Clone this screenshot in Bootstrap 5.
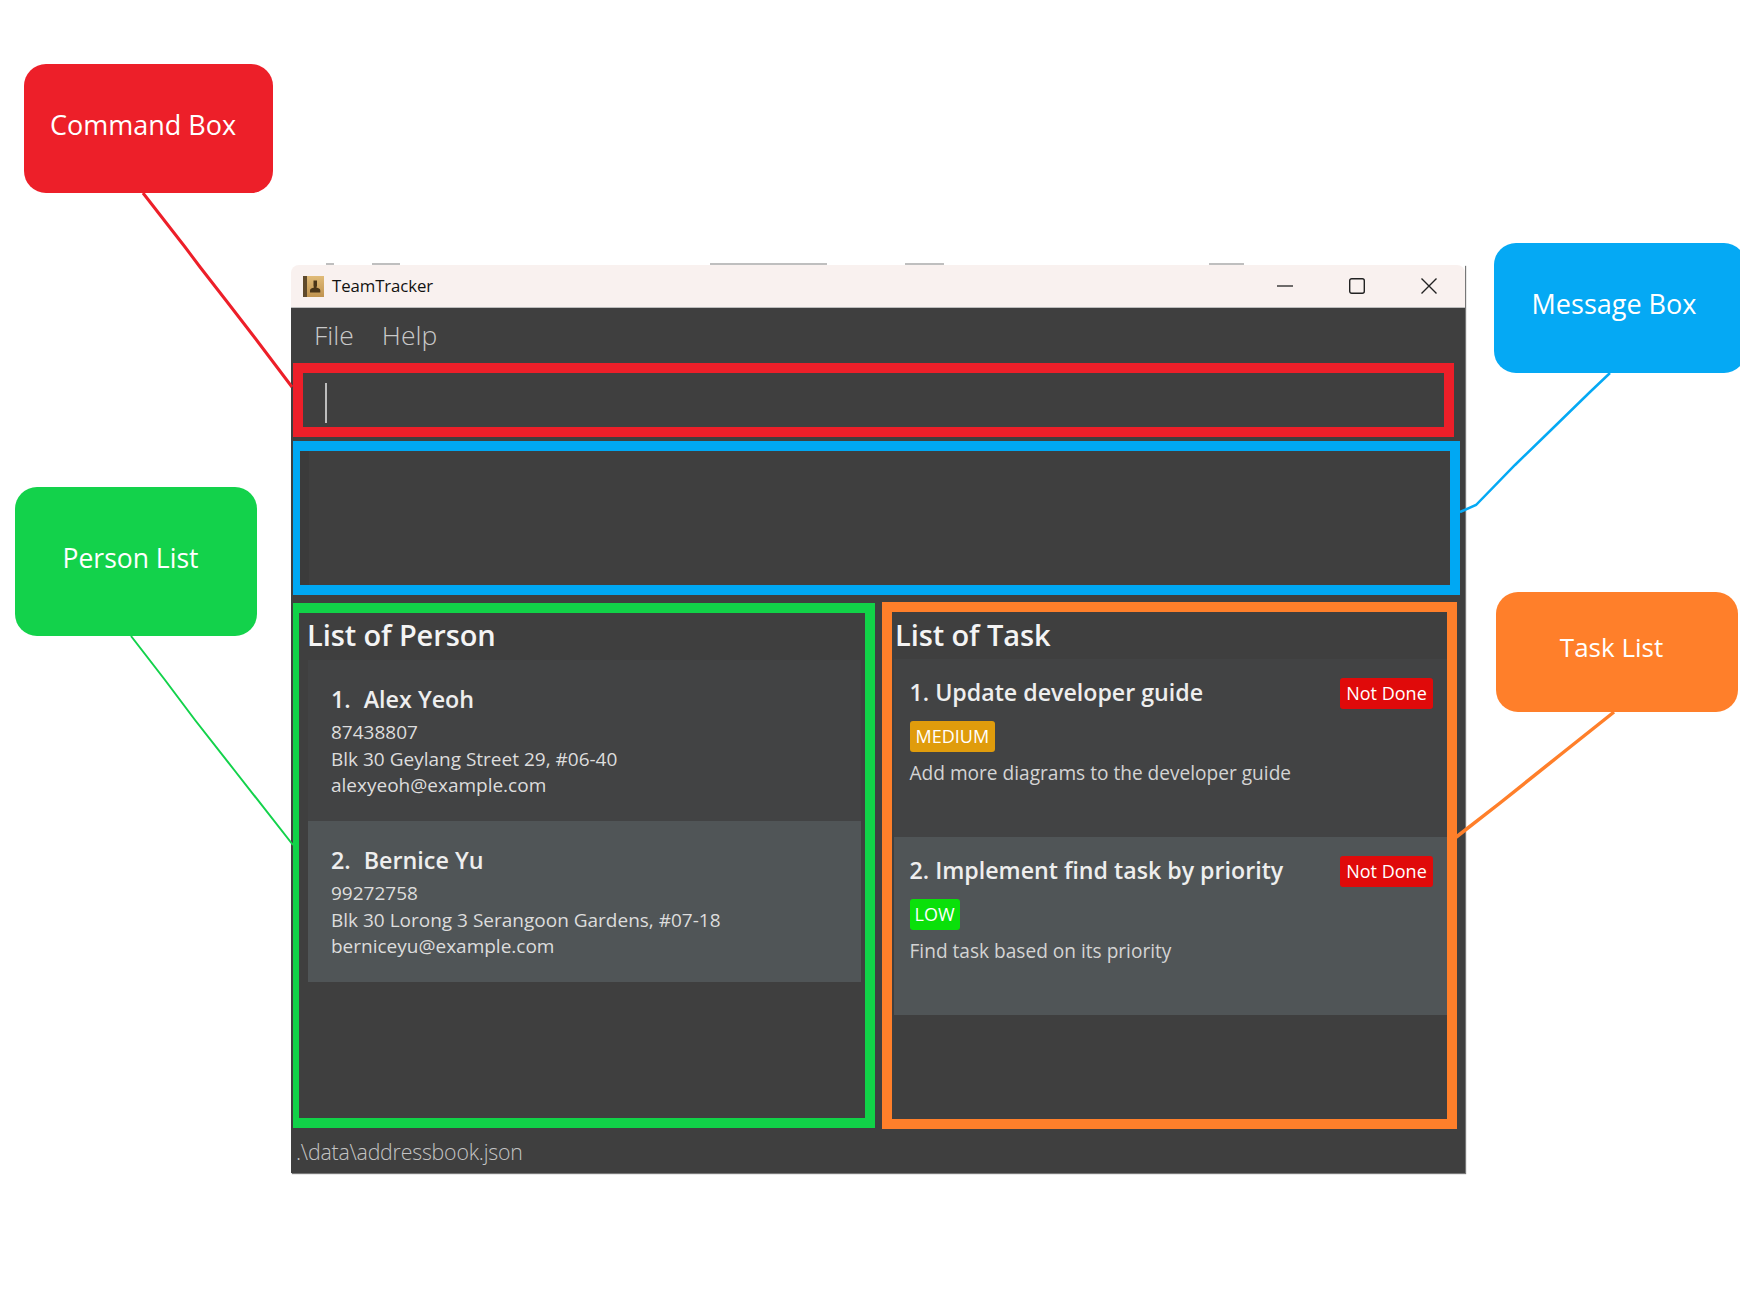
<!DOCTYPE html>
<html lang="en">
<head>
<meta charset="utf-8">
<title>TeamTracker annotated</title>
<link rel="stylesheet" href="https://cdn.jsdelivr.net/npm/bootstrap@5.3.0/dist/css/bootstrap.min.css">
<style>
html,body{margin:0;background:#fff}
body{font-family:"Open Sans","Noto Sans",sans-serif;position:relative;width:1740px;height:1314px;overflow:hidden;color:#fff}
.app-win{position:absolute;left:291px;top:265px;width:1174px;height:908px;box-shadow:1px 1px 1px #777}
.title-strip{height:43px;background:#f9f1ef;border-radius:8px 8px 0 0;color:#111;font-size:16.8px;padding-left:12px;border-bottom:1px solid #bdbdbd}
.title-strip .app-name{margin-left:8px;letter-spacing:-.1px}
.win-ctl{width:16px;height:16px;display:block}
.ctl-row{gap:56px;margin-right:28px}
.app-body{height:865px;background:#3f3f3f;padding-left:2px}
.menu-strip{height:55px;padding-left:21px;gap:28px;font-size:26.5px;font-weight:300;color:#c9c9c9}
.cmd-frame{height:74px;width:1161px;border:10px solid #ed1f29;padding:10px 0 4px 22px}
.caret-bar{display:block;width:2px;height:40px;background:#bdbdbd}
.msg-frame{height:154px;width:1167px;margin-top:4px;border:10px solid #00a8f3;border-left-width:7px}
.msg-inner{height:100%;border-left:9px solid #3b3b3b}
.panes{margin-top:8px;height:525px;gap:7px}
.person-frame{width:582px;border:10px solid #11d248;border-left-width:6px}
.task-frame{width:575px;border:10px solid #ff7f2a;margin-top:-1px;height:527px}
.pane-head{font-size:29px;font-weight:600;color:#f4f4f4;line-height:43px;margin-bottom:4px;padding-left:8px;letter-spacing:-.1px}
.task-frame .pane-head{padding-left:3px;margin-top:1px;margin-bottom:3px}
.person-list{margin:0 4.5px 0 8.5px;border-radius:0;background:transparent}
.person-list .list-group-item{border:0;border-radius:0;padding:22px 10px 0 23.5px;height:161px;color:#ddd;background:#424344;font-size:19px;line-height:26.6px}
.person-list .list-group-item.alt-row,.task-list .list-group-item.alt-row{background:#505557}
.who{font-size:23.3px;font-weight:600;line-height:34px;color:#eee;margin-bottom:3px}
.who span{margin-right:13px}
.task-list{margin-left:2px;border-radius:0;background:transparent}
.task-list .list-group-item{border:0;border-radius:0;height:178px;padding:17px 14px 0 15.5px;background:#424344;color:#d4d4d4;font-size:19.1px;line-height:26px}
.task-row{height:32px}
.task-name{font-size:23.2px;font-weight:600;line-height:32px;color:#eee}
.tag-box{font-size:18px;font-weight:500;line-height:31px;height:31px;padding:0 6px;border-radius:3px;color:#fff;display:inline-block}
.tag-red{background:#e00a0a;width:93px;text-align:center;padding:0;margin-top:2px}
.tag-amber{background:#e09c0c}
.tag-green{background:#0ae00a;padding:0 5px}
.tag-line{margin-top:13px;height:31px}
.task-desc{margin-top:8px}
.foot-strip{height:44px;padding:2px 0 0 3px;font-size:21.3px;font-weight:300;color:#c4c4c4;margin-top:1px;letter-spacing:-.2px}
.call-out{position:absolute;border-radius:22px;font-size:27px;font-weight:400;color:#fff;text-align:center;padding-right:11px;line-height:36px}
.c-cmd{left:24px;top:64px;width:249px;height:129px;background:#ed1f29;padding-top:43px}
.c-per{left:15px;top:487px;width:242px;height:149px;background:#13d24b;padding-top:53px;font-size:26.5px}
.c-msg{left:1494px;top:243px;width:252px;height:130px;background:#05a9f4;padding-top:43px;padding-right:12px}
.c-tsk{left:1496px;top:592px;width:242px;height:120px;background:#ff7f2a;padding-top:37px;font-size:26px}
.lead-lines{position:absolute;left:0;top:0;width:1740px;height:1314px;pointer-events:none}
</style>
</head>
<body>
<div class="app-win d-flex flex-column">
  <div class="title-strip d-flex align-items-center">
    <svg width="21" height="21" viewBox="0 0 21 21"><defs><linearGradient id="bookFill" x1="0" y1="0" x2="0" y2="1"><stop offset="0" stop-color="#e0bb78"/><stop offset="1" stop-color="#c0934f"/></linearGradient></defs><rect width="21" height="21" fill="url(#bookFill)"/><rect width="4" height="21" fill="#5f4a2c"/><path d="M10.500 4.500h3.500v5.500l-.7 1.500c2 .7 4 1.200 4 3v2H7v-2c0-1.800 2-2.300 4-3l-.5-1.500z" fill="#4a3518"/></svg>
    <span class="app-name">TeamTracker</span>
    <div class="ctl-row d-flex align-items-center ms-auto">
      <svg class="win-ctl" viewBox="0 0 16 16"><path d="M0 8h16" stroke="#222" stroke-width="1.3"/></svg>
      <svg class="win-ctl" viewBox="0 0 16 16"><rect x=".7" y=".7" width="14.6" height="14.6" rx="2" fill="none" stroke="#222" stroke-width="1.4"/></svg>
      <svg class="win-ctl" viewBox="0 0 16 16"><path d="M.5.5l15 15M15.500.5l-15 15" stroke="#222" stroke-width="1.4"/></svg>
    </div>
  </div>
  <div class="app-body d-flex flex-column">
    <div class="menu-strip d-flex align-items-center"><span>File</span><span>Help</span></div>
    <div class="cmd-frame"><span class="caret-bar"></span></div>
    <div class="msg-frame"><div class="msg-inner"></div></div>
    <div class="panes d-flex align-items-start">
      <div class="person-frame h-100">
        <div class="pane-head">List of Person</div>
        <div class="list-group person-list">
          <div class="list-group-item">
            <div class="who"><span>1.</span>Alex Yeoh</div>
            <div>87438807</div><div>Blk 30 Geylang Street 29, #06-40</div><div>alexyeoh@example.com</div>
          </div>
          <div class="list-group-item alt-row">
            <div class="who"><span>2.</span>Bernice Yu</div>
            <div>99272758</div><div>Blk 30 Lorong 3 Serangoon Gardens, #07-18</div><div>berniceyu@example.com</div>
          </div>
        </div>
      </div>
      <div class="task-frame">
        <div class="pane-head">List of Task</div>
        <div class="list-group task-list">
          <div class="list-group-item">
            <div class="task-row d-flex justify-content-between align-items-center"><span class="task-name">1. Update developer guide</span><span class="tag-box tag-red">Not Done</span></div>
            <div class="tag-line"><span class="tag-box tag-amber">MEDIUM</span></div>
            <div class="task-desc">Add more diagrams to the developer guide</div>
          </div>
          <div class="list-group-item alt-row">
            <div class="task-row d-flex justify-content-between align-items-center"><span class="task-name">2. Implement find task by priority</span><span class="tag-box tag-red">Not Done</span></div>
            <div class="tag-line"><span class="tag-box tag-green">LOW</span></div>
            <div class="task-desc">Find task based on its priority</div>
          </div>
        </div>
      </div>
    </div>
    <div class="foot-strip d-flex align-items-center">.\data\addressbook.json</div>
  </div>
</div>
<div class="call-out c-cmd">Command Box</div>
<div class="call-out c-per">Person List</div>
<div class="call-out c-msg">Message Box</div>
<div class="call-out c-tsk">Task List</div>
<svg class="lead-lines" viewBox="0 0 1740 1314" fill="none">
  <path d="M710 264H827M905 264H944M1209 264H1244M326 264H334M372 264H400" stroke="#aaa" stroke-width="1.5"/>
  <polyline points="143,193 185,247 200,267 228,303 255,338 292,387" stroke="#ed1f29" stroke-width="3"/>
  <polyline points="131,636 165,680 195,720 235,771 293,845" stroke="#13d24b" stroke-width="2"/>
  <polyline points="1610,373 1590,392 1550,431 1515,465 1476,505 1460,512" stroke="#05a9f4" stroke-width="2.5"/>
  <polyline points="1614,712 1560,755 1500,803 1455,838" stroke="#ff7f2a" stroke-width="3.5"/>
</svg>
</body>
</html>
